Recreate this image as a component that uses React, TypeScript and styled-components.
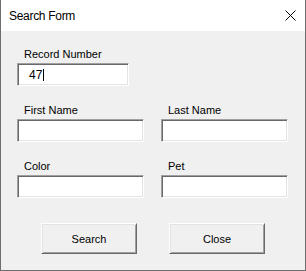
import React from 'react'
import styled, { createGlobalStyle } from 'styled-components'

const GlobalStyle = createGlobalStyle`
  html, body {
    margin: 0;
    padding: 0;
    background: #ffffff;
  }
  * {
    box-sizing: border-box;
  }
`

const App: React.FC = () => {
  return (
    <>
      <GlobalStyle />
      <Window>
        <TitleBar>
          <Title>Search Form</Title>
          <CloseIcon width="11" height="11" viewBox="0 0 11 11">
            <path d="M0.5 0.5 L10.5 10.5 M10.5 0.5 L0.5 10.5" />
          </CloseIcon>
        </TitleBar>
        <Body>
          <Fields>
            <Field $span>
              <Label>Record Number</Label>
              <TextBox $width={112}>
                47
                <Caret />
              </TextBox>
            </Field>
            <Field>
              <Label>First Name</Label>
              <TextBox />
            </Field>
            <Field>
              <Label>Last Name</Label>
              <TextBox />
            </Field>
            <Field>
              <Label>Color</Label>
              <TextBox />
            </Field>
            <Field>
              <Label>Pet</Label>
              <TextBox />
            </Field>
          </Fields>
          <Buttons>
            <Button>Search</Button>
            <Button>Close</Button>
          </Buttons>
        </Body>
      </Window>
    </>
  )
}

const Window = styled.div`
  width: 306px;
  height: 271px;
  display: flex;
  flex-direction: column;
  border: 1px solid #6e6e6e;
  border-top: none;
  font-family: 'Liberation Sans', Arial, sans-serif;
  color: #000000;
`

const TitleBar = styled.div`
  height: 31px;
  flex: none;
  display: flex;
  align-items: center;
  justify-content: space-between;
  padding: 0 9px 0 8px;
  background: #ffffff;
`

const Title = styled.span`
  font-size: 12px;
  letter-spacing: -0.3px;
`

const CloseIcon = styled.svg`
  fill: none;
  stroke: #000000;
  stroke-width: 1;
`

const Body = styled.div`
  flex: 1;
  display: flex;
  flex-direction: column;
  padding: 17px 16px 0;
  background: #f0f0f0;
`

const Fields = styled.div`
  display: grid;
  grid-template-columns: 127px 127px;
  column-gap: 17px;
  row-gap: 18px;
`

const Field = styled.div<{ $span?: boolean }>`
  display: flex;
  flex-direction: column;
  grid-column: ${props => (props.$span ? '1 / span 2' : 'auto')};
`

const Label = styled.label`
  padding-left: 7px;
  margin-bottom: 2px;
  font-size: 11px;
  line-height: 13px;
`

const TextBox = styled.div<{ $width?: number }>`
  width: ${props => (props.$width ? `${props.$width}px` : '100%')};
  height: 23px;
  display: flex;
  align-items: center;
  padding-left: 11px;
  background: #ffffff;
  font-size: 12px;
  border-style: solid;
  border-width: 1px;
  border-color: #a0a0a0 #ffffff #ffffff #a0a0a0;
  box-shadow: inset 1px 1px 0 #696969, inset -1px -1px 0 #e3e3e3;
`

const Caret = styled.span`
  width: 1px;
  height: 12px;
  margin-left: 1px;
  background: #000000;
`

const Buttons = styled.div`
  display: flex;
  justify-content: center;
  gap: 32px;
  margin-top: 25px;
`

const Button = styled.button`
  width: 96px;
  height: 31px;
  padding: 0;
  background: #f0f0f0;
  font-family: 'Liberation Sans', Arial, sans-serif;
  font-size: 11px;
  color: #000000;
  border-style: solid;
  border-width: 1px;
  border-color: #ffffff #696969 #696969 #ffffff;
  box-shadow: inset 1px 1px 0 #e3e3e3, inset -1px -1px 0 #a0a0a0;
`

export default App
